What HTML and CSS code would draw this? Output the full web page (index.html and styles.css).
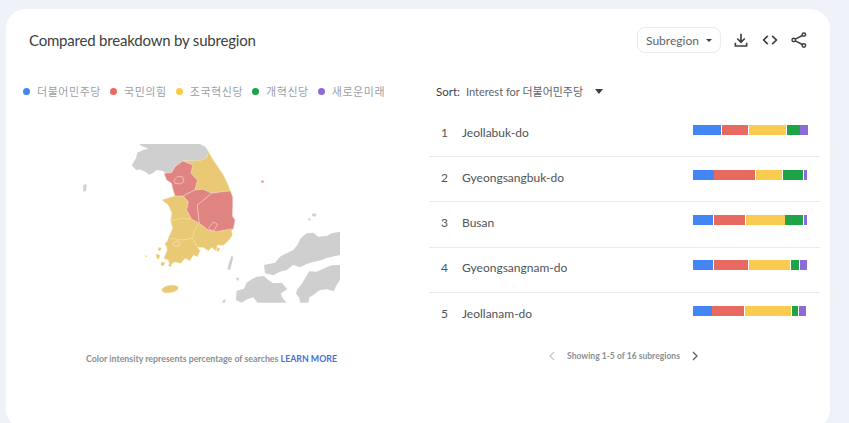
FILE: index.html
```html
<!DOCTYPE html>
<html lang="en">
<head>
<meta charset="utf-8">
<title>Compared breakdown by subregion</title>
<link rel="stylesheet" href="styles.css">
</head>
<body>
<main class="card">
  <header class="head">
    <h1 class="title">Compared breakdown by subregion</h1>
    <div class="tools">
      <div class="select"><span>Subregion</span><i class="caret-sm"></i></div>
      <svg class="tool" viewBox="0 0 24 24" width="18" height="18"><path d="M12 3.500v11M7 10l5 5 5-5M4.500 15.500v4.500h15v-4.500" fill="none" stroke="#3c4043" stroke-width="2.200"/></svg>
      <svg class="tool" viewBox="0 0 24 24" width="18" height="18"><path d="M9 6.500 3.500 12 9 17.500M15 6.500l5.500 5.500-5.500 5.500" fill="none" stroke="#3c4043" stroke-width="2.200"/></svg>
      <svg class="tool" viewBox="0 0 24 24" width="18" height="18"><g fill="none" stroke="#3c4043" stroke-width="2"><circle cx="18.500" cy="4.800" r="2.300"/><circle cx="5" cy="12" r="2.300"/><circle cx="18.500" cy="19.200" r="2.300"/><path d="M7 10.900 16.500 6M7 13.100l9.500 4.900"/></g></svg>
    </div>
  </header>
  <div class="body">
    <section class="left">
      <ul class="legend">
        <li><i class="dot blue"></i>더불어민주당</li>
        <li><i class="dot red"></i>국민의힘</li>
        <li><i class="dot yellow"></i>조국혁신당</li>
        <li><i class="dot green"></i>개혁신당</li>
        <li><i class="dot purple"></i>새로운미래</li>
      </ul>
      <svg class="map" viewBox="0 0 900 570" width="300" height="190">
        <g class="land">
          <path d="M240 42H420L436 50 446 65 441 82 420 92H368L345 110 335 128 318 128 305 122 290 120 280 128 268 134 255 125 240 118 228 120 215 106 228 85 232 68 250 60 265 56 240 46Z"/>
          <path d="M840 305 815 310 800 318 775 320 760 308 740 310 722 325 712 345 700 360 675 372 660 380 645 398 612 405 615 430 640 436 660 425 680 420 700 405 720 412 740 402 760 396 785 390 800 384 840 375Z"/>
          <path d="M840 405 815 406 800 412 770 425 748 424 738 440 725 462 712 478 708 490 718 505 720 518H745L748 502 760 495 780 480 800 478 822 484 828 468 840 450Z"/>
          <path d="M560 458 575 448 590 440 612 438 625 450 640 460 665 458 682 478 662 490 668 505 680 518H592L580 502 562 508 545 518 528 510 530 482 552 476Z"/>
          <path d="M514 378 520 380 516 398 510 420 502 418 508 396Z"/>
          <path d="M758 250 770 252 766 260 756 258ZM745 264 752 266 750 272 744 270Z"/>
          <path d="M70 165 80 162 78 182 70 185Z"/>
          <path d="M530 442 537 444 535 452 529 450ZM490 510 498 508 494 518 486 518ZM320 128 326 126 326 134 318 134Z"/>
        </g>
        <g class="party-y">
          <path d="M445 65 458 88 472 108 490 135 502 160 511 183 480 186 455 190 430 178 405 180 412 150 393 130 398 105 368 93 420 92 441 82Z"/>
          <path d="M306 210 325 204 345 198 370 198 385 215 380 240 395 268 365 265 332 272 336 250 325 225Z"/>
          <path d="M332 272 365 265 395 268 418 280 402 305 398 325 370 330 325 325 338 295Z"/>
          <path d="M325 325 370 330 398 325 412 352 420 362 412 380 400 375 390 392 375 385 362 400 345 395 330 405 325 390 312 385 322 360 318 345Z"/>
          <path d="M418 280 445 300 470 305 495 300 520 296 514 303 517 315 505 332 490 346 472 345 468 362 455 352 445 362 430 352 412 352 398 325 402 305Z"/>
          <ellipse cx="330" cy="477" rx="25" ry="11" transform="rotate(-9 330 477)"/>
          <path class="isle" d="M296 352 304 354 300 364 294 360ZM288 372 300 376 296 388 290 384ZM304 396 316 398 310 408 302 406ZM326 402 336 404 332 410 326 408ZM256 376 262 378 258 382ZM318 336 324 338 320 346 315 344ZM474 352 480 356 474 366 470 360Z"/>
        </g>
        <g class="party-r">
          <path d="M368 93 398 105 393 130 412 150 405 180 385 190 370 198 345 198 338 175 335 160 320 150 312 130 335 128 345 110Z"/>
          <path d="M405 180 430 178 455 190 425 215 412 225 418 280 395 268 380 240 385 215 370 198 385 190Z"/>
          <path d="M455 190 480 186 511 183 518 200 518 232 517 258 525 270 520 296 495 300 470 305 445 300 418 280 412 225 425 215Z"/>
          <path d="M604 152H611V158H604Z"/>
        </g>
        <g class="holes">
          <path class="hole-r" d="M342 150 352 140 368 140 372 155 360 162 345 160Z"/>
          <path class="hole-y" d="M338 340 355 332 360 345 345 350Z"/>
          <path class="hole-r" d="M447 292 460 276 472 282 462 302 449 300Z"/>
        </g>
      </svg>
      <p class="note">Color intensity represents percentage of searches <a class="more">LEARN MORE</a></p>
    </section>
    <section class="right">
      <div class="sort"><span class="sort-label">Sort:</span><span class="sort-value">Interest for 더불어민주당</span><i class="caret"></i></div>
      <ol class="rows">
        <li class="row"><span class="num">1</span><span class="name">Jeollabuk-do</span>
          <div class="bar"><i class="blue" style="width:28.3px"></i><i class="red" style="width:26.300px"></i><i class="yellow" style="width:37.300px"></i><i class="green" style="width:12.700px"></i><i class="purple" style="width:7.300px"></i></div></li>
        <li class="row"><span class="num">2</span><span class="name">Gyeongsangbuk-do</span>
          <div class="bar"><i class="blue" style="width:20.700px"></i><i class="red" style="width:40.700px"></i><i class="yellow" style="width:26.700px"></i><i class="green" style="width:20.300px"></i><i class="purple" style="width:3.300px"></i></div></li>
        <li class="row"><span class="num">3</span><span class="name">Busan</span>
          <div class="bar"><i class="blue" style="width:20.300px"></i><i class="red" style="width:31.300px"></i><i class="yellow" style="width:38.700px"></i><i class="green" style="width:18px"></i><i class="purple" style="width:3.300px"></i></div></li>
        <li class="row"><span class="num">4</span><span class="name">Gyeongsangnam-do</span>
          <div class="bar"><i class="blue" style="width:20.300px"></i><i class="red" style="width:34.300px"></i><i class="yellow" style="width:41.300px"></i><i class="green" style="width:8.300px"></i><i class="purple" style="width:7.300px"></i></div></li>
        <li class="row"><span class="num">5</span><span class="name">Jeollanam-do</span>
          <div class="bar"><i class="blue" style="width:18.700px"></i><i class="red" style="width:32px"></i><i class="yellow" style="width:46px"></i><i class="green" style="width:6.700px"></i><i class="purple" style="width:7.300px"></i></div></li>
      </ol>
      <nav class="pager">
        <svg viewBox="0 0 10 12" width="8" height="10"><path d="M7.500 1 2.500 6l5 5" fill="none" stroke="#c4c7ca" stroke-width="1.500"/></svg>
        <span>Showing 1-5 of 16 subregions</span>
        <svg viewBox="0 0 10 12" width="8" height="10"><path d="M2.500 1l5 5-5 5" fill="none" stroke="#5f6368" stroke-width="1.700"/></svg>
      </nav>
    </section>
  </div>
</main>
</body>
</html>
```
FILE: styles.css
```css
* { box-sizing: border-box; }
html, body { height: 100%; }
body {
  margin: 0;
  overflow: hidden;
  background: #eff3f9;
  font-family: Lato, "Noto Sans CJK KR", sans-serif;
}
.card {
  width: 824px;
  height: 420px;
  margin: 9px 0 0 6px;
  background: #fff;
  border-radius: 20px;
  padding: 18px 9px 0 23px;
}
.head {
  display: flex;
  justify-content: space-between;
  align-items: center;
  height: 26px;
}
.title {
  margin: 0;
  font-size: 15px;
  letter-spacing: -.2px;
  font-weight: 400;
  color: #3c4043;
  white-space: nowrap;
}
.tools {
  display: flex;
  align-items: center;
  gap: 11px;
  padding-right: 13px;
}
.select {
  width: 84px;
  height: 26px;
  display: flex;
  align-items: center;
  justify-content: space-between;
  padding: 0 8px 0 8px;
  border: 1px solid #e8eaed;
  border-radius: 8px;
  font-size: 12px;
  color: #5f6368;
}
.caret-sm {
  border: 3px solid transparent;
  border-top: 3.500px solid #3c4043;
  border-bottom: 0;
}
.tool { display: block; }
.body {
  display: flex;
  margin-top: 28px;
}
.left { width: 400px; flex: none; }
.legend {
  list-style: none;
  margin: 0 0 0 -6px;
  padding: 0;
  display: flex;
  height: 20px;
  align-items: center;
  gap: 9px;
  font-size: 11px;
  letter-spacing: .55px;
  color: #9aa0a6;
  white-space: nowrap;
}
.legend li { display: flex; align-items: center; }
.dot {
  width: 7px;
  height: 7px;
  border-radius: 50%;
  margin-right: 7px;
}
.blue { background: #4285f4; }
.red { background: #e8695f; }
.yellow { background: #f9cc50; }
.green { background: #1ea446; }
.purple { background: #8c6bd8; }
.map {
  display: block;
  margin: 29px 0 0 31px;
  filter: blur(.35px);
}
.land { fill: #cfcfcf; }
.party-y { fill: #e9c974; stroke: #f1dc9f; stroke-width: 1.500; }
.party-r { fill: #df8480; stroke: #f4d2cf; stroke-width: 1.500; }
.isle { stroke: none; }
.holes { stroke: #fbeeee; stroke-width: 1.500; }
.hole-r { fill: #df8480; }
.hole-y { fill: #e9c974; }
.note {
  margin: 33px 0 0 57px;
  font-size: 8.800px;
  font-weight: 700;
  color: #8a8f94;
  white-space: nowrap;
}
.more { color: #4a6fd8; }
.right { width: 391px; flex: none; }
.sort {
  display: flex;
  align-items: center;
  height: 20px;
  padding-left: 7px;
  font-size: 11px;
  color: #5f6368;
}
.sort-label { width: 30px; font-size: 11.500px; color: #3c4043; }
.caret {
  margin-left: 12px;
  border: 4.500px solid transparent;
  border-top: 5.500px solid #3c4043;
  border-bottom: 0;
}
.rows {
  list-style: none;
  margin: 11px 0 0;
  padding: 0;
}
.row {
  display: flex;
  align-items: center;
  height: 45.200px;
  padding-bottom: 4px;
  border-bottom: 1px solid #e8eaed;
  font-size: 12px;
  color: #4f5358;
}
.row:last-child { border-bottom: 0; }
.num { width: 33px; padding-left: 12px; }
.name { flex: 1; }
.bar {
  display: flex;
  gap: .7px;
  width: 114.500px;
  height: 10px;
  margin: 0 12.500px 5px 0;
}
.bar i { display: block; height: 100%; flex: none; }
.pager {
  display: flex;
  align-items: center;
  margin: 13px 0 0 119px;
  gap: 11px;
  font-size: 8.550px;
  font-weight: 700;
  color: #8a8f94;
  white-space: nowrap;
}
```
